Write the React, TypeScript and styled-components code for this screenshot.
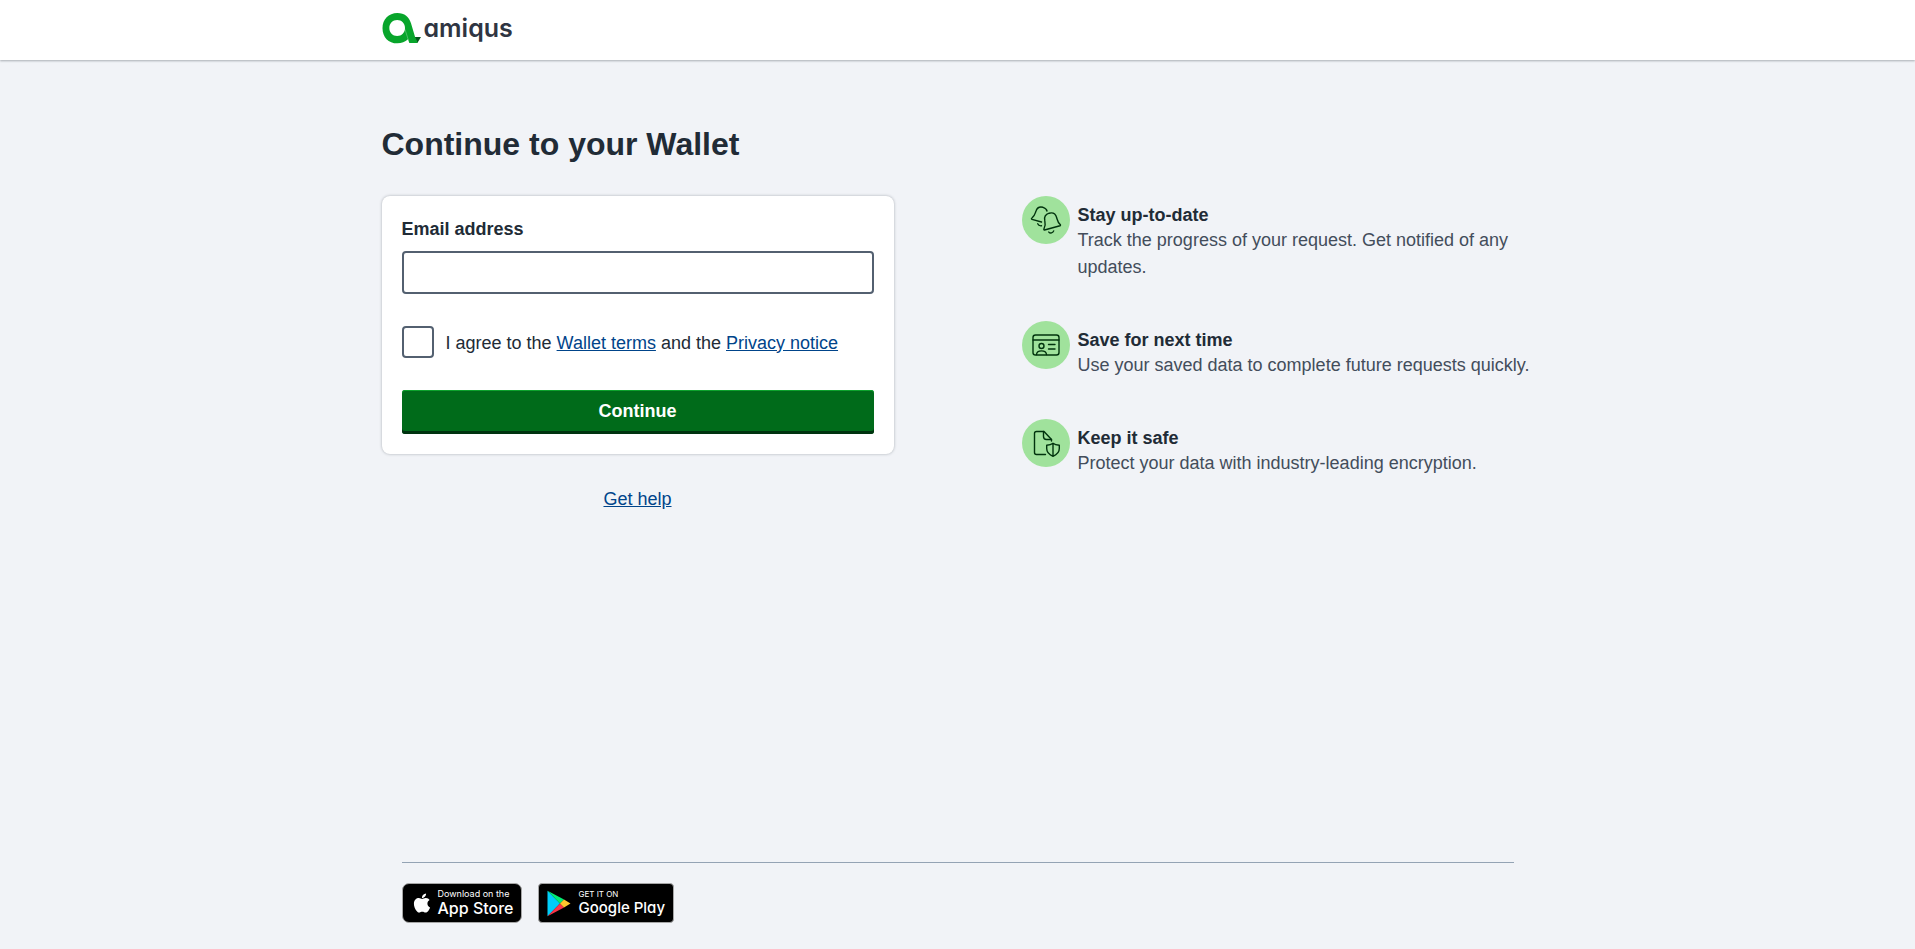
import React, { useState } from "react";
import styled, { createGlobalStyle } from "styled-components";
import { FaApple } from "react-icons/fa";

const GlobalStyle = createGlobalStyle`
  *, *::before, *::after { box-sizing: border-box; }
  body {
    margin: 0;
    background: #f1f3f7;
    color: #212b36;
    font: 18px/27px "Liberation Sans", Arial, sans-serif;
  }
`;

const Page = styled.div`
  display: flex;
  flex-direction: column;
  min-height: 100vh;
`;

const Container = styled.div`
  width: 100%;
  max-width: 1152px;
  margin: 0 auto;
`;

const Header = styled.header`
  background: #fff;
  box-shadow: 0 1px 2px rgba(33, 43, 54, 0.35);
`;

const HeaderInner = styled(Container)`
  display: flex;
  align-items: center;
  height: 60px;
  padding-bottom: 4px;
`;

const Brand = styled.a`
  display: flex;
  align-items: center;
  gap: 3px;
  color: #2f3542;
  text-decoration: none;
`;

const BrandName = styled.span`
  font: 600 25px/32px Inter, sans-serif;
  font-feature-settings: "cv11";
`;

const Main = styled.main`
  flex: 1;
  padding: 64px 0;
`;

const Title = styled.h1`
  margin: 0 0 32px;
  font-size: 32px;
  line-height: 40px;
`;

const Columns = styled.div`
  display: grid;
  grid-template-columns: repeat(auto-fit, minmax(400px, 1fr));
  column-gap: 128px;
  row-gap: 40px;
  align-items: start;
`;

const SignIn = styled.div`
  display: flex;
  flex-direction: column;
  align-items: center;
  gap: 32px;
`;

const Card = styled.form`
  display: flex;
  flex-direction: column;
  gap: 32px;
  width: 100%;
  padding: 20px;
  border-radius: 8px;
  background: #fff;
  box-shadow: 0 0 3px rgba(33, 43, 54, 0.35);
`;

const Field = styled.div`
  display: flex;
  flex-direction: column;
  gap: 8px;
`;

const FieldLabel = styled.label`
  font-weight: 700;
`;

const TextInput = styled.input`
  height: 43px;
  padding: 0 12px;
  border: 2px solid #536070;
  border-radius: 4px;
  background: #fff;
  color: inherit;
  font: inherit;
`;

const CheckRow = styled.div`
  display: flex;
  align-items: center;
  gap: 12px;
`;

const CheckLabel = styled.label`
  padding-top: 2px;
`;

const Checkbox = styled.input`
  flex: none;
  width: 32px;
  height: 32px;
  margin: 0;
  appearance: none;
  border: 2px solid #536070;
  border-radius: 4px;
  background: #fff;

  &:checked {
    background: #006b1a;
    box-shadow: inset 0 0 0 4px #fff;
  }
`;

const TextLink = styled.a`
  color: #00448a;
  text-decoration: underline;
`;

const SubmitButton = styled.button`
  height: 44px;
  padding: 0 16px 2px;
  border: 0;
  border-radius: 3px;
  background: #006b1a;
  box-shadow: inset 0 -3px 0 #003310, inset 0 1px 0 #0ca22c;
  color: #fff;
  font: inherit;
  font-weight: 700;
  cursor: pointer;
`;

const Benefits = styled.ul`
  display: flex;
  flex-direction: column;
  gap: 40px;
  margin: 0;
  padding: 0;
  list-style: none;
`;

const Benefit = styled.li`
  display: flex;
  gap: 8px;
`;

const IconDisc = styled.span`
  display: flex;
  flex: none;
  align-items: center;
  justify-content: center;
  width: 48px;
  height: 48px;
  border-radius: 50%;
  background: #a0e29c;
  color: #00330d;
`;

const BenefitText = styled.div`
  padding-top: 7px;
`;

const BenefitTitle = styled.h2`
  margin: 0;
  font-size: 18px;
  line-height: 24px;
`;

const BenefitBody = styled.p`
  margin: 0;
  color: #434d5b;
`;

const Footer = styled.footer`
  width: 100%;
  max-width: 1152px;
  margin: 0 auto;
  padding: 0 20px 26px;
`;

const Stores = styled.div`
  display: flex;
  gap: 16px;
  padding-top: 20px;
  border-top: 1px solid #94a3b4;
`;

const StoreBadge = styled.a<{ $width: number; $radius: number; $gap: number }>`
  display: flex;
  align-items: center;
  gap: ${(p) => p.$gap}px;
  width: ${(p) => p.$width}px;
  height: 40px;
  padding-left: 8px;
  border: 1px solid #a6a6a6;
  border-radius: ${(p) => p.$radius}px;
  background: #000;
  color: #fff;
  text-decoration: none;
  white-space: nowrap;
`;

const StoreText = styled.span`
  display: flex;
  flex-direction: column;
  font-family: Inter, sans-serif;
`;

const StoreLead = styled.span<{ $size: number }>`
  font-size: ${(p) => p.$size}px;
  line-height: 10px;
`;

const StoreName = styled.span<{ $size: number; $singleStorey?: boolean }>`
  font-size: ${(p) => p.$size}px;
  line-height: 18px;
  font-weight: 500;
  font-feature-settings: ${(p) => (p.$singleStorey ? '"cv11"' : "normal")};
`;

const BrandMark = () => (
  <svg width="39" height="32" viewBox="0 0 117 96" aria-hidden="true">
    <path d="M97 75H117L106 93Z" fill="#05591c" />
    <path
      fillRule="evenodd"
      fill="#08a52b"
      d="M46 3C68 3 81 14 87 34L99 74L107 93H82L78 82C69 90 59 94 46 94C19 94 1.500 75 1.500 48.500C1.500 22 20 3 46 3ZM45.500 24C32 24 22 34 22 48C22 62 32 72 45.500 72C59 72 69 62 69 48C69 34 59 24 45.500 24Z"
    />
    <path d="M69 52L79 84" stroke="#fff" strokeWidth="2" opacity="0.4" />
  </svg>
);

const strokes = {
  width: 32,
  height: 32,
  viewBox: "0 0 32 32",
  fill: "none",
  stroke: "currentColor",
  strokeWidth: 1.4,
  strokeLinecap: "round" as const,
  strokeLinejoin: "round" as const,
  "aria-hidden": true,
};

const BellsIcon = () => (
  <svg {...strokes}>
    <path d="M11.5 18L2 15.3C1.300 15 1.300 14.500 2 14C5 11.500 5 9.500 6 7C7.200 3.500 10 2.500 13 3.300C15.200 4 16.600 5 17 7" />
    <path d="M7.700 19.800C8.300 21.200 9.800 22 11.500 21.800" />
    <path d="M14.500 26L30 21.800C30.600 21.500 30.600 21 30.200 20.600C27.700 18.200 27.500 16.500 26.700 13.700C25.700 10 22.700 8.300 19.200 9.200C15.700 10.200 14 13 14.800 16.700C15.500 19.600 15.700 21.500 14 24.800C13.700 25.500 13.900 26.100 14.500 26Z" />
    <path d="M18.800 28.100C20.300 29.800 23 29 23.700 26.900" />
  </svg>
);

const IdCardIcon = () => (
  <svg {...strokes}>
    <rect x="3" y="6" width="26" height="20" rx="2.500" />
    <path d="M3 11H29M18.500 15.500H25M18.500 20H25" />
    <circle cx="11.500" cy="17" r="2.500" />
    <path d="M6.500 25.500C6.700 22.800 8.700 21.900 11.500 21.900S16.300 22.800 16.500 25.500" />
  </svg>
);

const SecureFileIcon = () => (
  <svg {...strokes}>
    <path d="M15.500 27.500H6.500C5.200 27.500 4.500 26.700 4.500 25.500V6.500C4.500 5.200 5.300 4.500 6.500 4.500H14L21.500 12.500V14" />
    <path d="M13.500 4.500V9.500C13.500 11.500 14.500 12.500 16.500 12.500H21.500" />
    <path d="M23 16.200C21.300 17.500 19.300 18 16.700 18.200V21.500C16.700 25 19 27.600 23 29.300C27 27.600 29.300 25 29.300 21.500V18.200C26.700 18 24.700 17.500 23 16.200ZM23 16.200V29" />
  </svg>
);

const PlayMark = () => (
  <svg width="24" height="27" viewBox="0 0 24 27" aria-hidden="true">
    <path d="M0.500 0.800V26.200L13 13.500Z" fill="#00cdf9" />
    <path d="M0.500 0.800L17 9.500L13 13.500Z" fill="#00ee76" />
    <path d="M0.500 26.200L17 17.500L13 13.500Z" fill="#fb3449" />
    <path d="M17 9.500L23.500 13.500L17 17.500L13 13.500Z" fill="#fec72e" />
  </svg>
);

const benefits = [
  {
    title: "Stay up-to-date",
    body: "Track the progress of your request. Get notified of any updates.",
    Icon: BellsIcon,
  },
  {
    title: "Save for next time",
    body: "Use your saved data to complete future requests quickly.",
    Icon: IdCardIcon,
  },
  {
    title: "Keep it safe",
    body: "Protect your data with industry-leading encryption.",
    Icon: SecureFileIcon,
  },
];

export default function App() {
  const [email, setEmail] = useState("");
  const [agreed, setAgreed] = useState(false);

  return (
    <Page>
      <GlobalStyle />
      <Header>
        <HeaderInner>
          <Brand href="#">
            <BrandMark />
            <BrandName>amiqus</BrandName>
          </Brand>
        </HeaderInner>
      </Header>

      <Main>
        <Container>
          <Title>Continue to your Wallet</Title>
          <Columns>
            <SignIn>
              <Card onSubmit={(e) => e.preventDefault()}>
                <Field>
                  <FieldLabel htmlFor="email">Email address</FieldLabel>
                  <TextInput
                    id="email"
                    type="email"
                    value={email}
                    onChange={(e) => setEmail(e.target.value)}
                  />
                </Field>
                <CheckRow>
                  <Checkbox
                    id="agree"
                    type="checkbox"
                    checked={agreed}
                    onChange={(e) => setAgreed(e.target.checked)}
                  />
                  <CheckLabel htmlFor="agree">
                    I agree to the <TextLink href="#terms">Wallet terms</TextLink> and the{" "}
                    <TextLink href="#privacy">Privacy notice</TextLink>
                  </CheckLabel>
                </CheckRow>
                <SubmitButton type="submit">Continue</SubmitButton>
              </Card>
              <TextLink href="#help">Get help</TextLink>
            </SignIn>

            <Benefits>
              {benefits.map(({ title, body, Icon }) => (
                <Benefit key={title}>
                  <IconDisc>
                    <Icon />
                  </IconDisc>
                  <BenefitText>
                    <BenefitTitle>{title}</BenefitTitle>
                    <BenefitBody>{body}</BenefitBody>
                  </BenefitText>
                </Benefit>
              ))}
            </Benefits>
          </Columns>
        </Container>
      </Main>

      <Footer>
        <Stores>
          <StoreBadge href="#app-store" $width={120} $radius={7} $gap={5}>
            <FaApple size={22} aria-hidden="true" />
            <StoreText>
              <StoreLead $size={9}>Download on the</StoreLead>
              <StoreName $size={16}>App Store</StoreName>
            </StoreText>
          </StoreBadge>
          <StoreBadge href="#google-play" $width={136} $radius={4} $gap={8}>
            <PlayMark />
            <StoreText>
              <StoreLead $size={8}>GET IT ON</StoreLead>
              <StoreName $size={15} $singleStorey>
                Google Play
              </StoreName>
            </StoreText>
          </StoreBadge>
        </Stores>
      </Footer>
    </Page>
  );
}
